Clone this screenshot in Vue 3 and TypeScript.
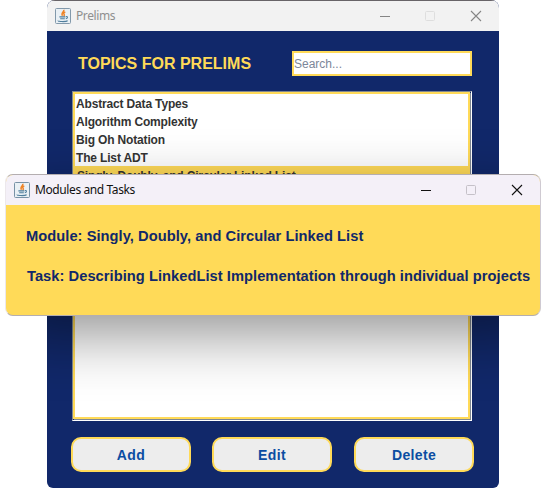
<script setup lang="ts">
import { ref } from 'vue'

const query = ref<string>('')
const topics: string[] = [
  'Abstract Data Types',
  'Algorithm Complexity',
  'Big Oh Notation',
  'The List ADT',
  'Singly, Doubly, and Circular Linked List',
]
const selected = ref<number>(4)
const actions: string[] = ['Add', 'Edit', 'Delete']
</script>

<template>
  <div class="desktop">
    <section class="window main">
      <header class="bar">
        <svg class="java" viewBox="0 0 16 16">
          <rect x=".5" y=".5" width="15" height="15" rx="1" fill="#e9f0f5" stroke="#8299ab" />
          <path d="M8.8 1.8C9.7 3.8 5.4 4.9 7.5 7.8M10.3 3.9C8.3 4.9 8.5 5.7 9.2 6.4C9.7 7 9.2 7.7 8.7 8.2" fill="none" stroke="#ee8428" stroke-width="1.5" />
          <path d="M4.4 8.9H10.4M5.2 10.8H9.8M11 8.6C13.2 8.2 12.7 10.6 10.8 10.8M3.2 12.6C2.5 13.8 11.5 14 12.6 12.6" fill="none" stroke="#4f7e9d" stroke-width="1.1" />
        </svg>
        <span class="title">Prelims</span>
        <svg class="controls" viewBox="0 0 110 12">
          <path d="M0 6.5H10" stroke="#858585" />
          <rect x="45.5" y="1.5" width="9" height="9" rx="1" fill="none" stroke="#dedede" />
          <path d="M91 1L101 11M101 1L91 11" stroke="#858585" stroke-width="1.1" />
        </svg>
      </header>
      <div class="body">
        <div class="head">
          <h1>TOPICS FOR PRELIMS</h1>
          <input v-model="query" class="search" type="text" placeholder="Search..." />
        </div>
        <div class="frame">
          <ul class="list">
            <li v-for="(topic, i) in topics" :key="topic" :class="{ on: i === selected }" @click="selected = i">{{ topic }}</li>
          </ul>
        </div>
        <div class="actions">
          <button v-for="action in actions" :key="action" type="button">{{ action }}</button>
        </div>
      </div>
      <div class="shade"></div>
    </section>

    <section class="window dialog">
      <header class="bar">
        <svg class="java" viewBox="0 0 16 16">
          <rect x=".5" y=".5" width="15" height="15" rx="1" fill="#e9f0f5" stroke="#7892a6" />
          <path d="M8.8 1.8C9.7 3.8 5.4 4.9 7.5 7.8M10.3 3.9C8.3 4.9 8.5 5.7 9.2 6.4C9.7 7 9.2 7.7 8.7 8.2" fill="none" stroke="#ee8428" stroke-width="1.5" />
          <path d="M4.4 8.9H10.4M5.2 10.8H9.8M11 8.6C13.2 8.2 12.7 10.6 10.8 10.8M3.2 12.6C2.5 13.8 11.5 14 12.6 12.6" fill="none" stroke="#4f7e9d" stroke-width="1.1" />
        </svg>
        <span class="title">Modules and Tasks</span>
        <svg class="controls" viewBox="0 0 110 12">
          <path d="M0 6.5H10" stroke="#111" />
          <rect x="45.5" y="1.5" width="9" height="9" rx="1" fill="none" stroke="#c5c1c8" />
          <path d="M91 1L101 11M101 1L91 11" stroke="#111" stroke-width="1.1" />
        </svg>
      </header>
      <div class="details">
        <p class="module">Module: Singly, Doubly, and Circular Linked List</p>
        <p class="task">Task: Describing LinkedList Implementation through individual projects</p>
      </div>
    </section>
  </div>
</template>

<style>
body {
  background: #fff;
}
</style>

<style scoped>
* {
  box-sizing: border-box;
}
.desktop {
  position: relative;
  width: 545px;
  height: 490px;
  overflow: hidden;
  background: #fff;
  font-family: 'Liberation Sans', Arial, sans-serif;
}
.window {
  position: absolute;
  overflow: hidden;
}
.main {
  left: 47px;
  top: 0;
  width: 452px;
  height: 488px;
  border-radius: 8px 8px 6px 6px;
  background: #11286a;
}
.bar {
  display: flex;
  align-items: center;
  padding-left: 8px;
  font-family: 'Noto Sans', 'Open Sans', sans-serif;
  font-size: 12px;
  letter-spacing: -0.4px;
  white-space: nowrap;
}
.main .bar {
  height: 31px;
  border-top: 1px solid #686468;
  background: #f2f2f2;
  color: #8f8f8f;
}
.java {
  width: 16px;
  height: 16px;
  flex: none;
}
.title {
  margin-left: 5px;
  line-height: 16px;
}
.controls {
  width: 110px;
  height: 12px;
  flex: none;
  margin: 0 9px 0 auto;
}
.body {
  padding: 20px 25px 0 24px;
}
.head {
  display: flex;
  justify-content: space-between;
  align-items: center;
  height: 25px;
  padding: 0 2px 0 7px;
}
h1 {
  margin: 0;
  padding-top: 1px;
  color: #ffda58;
  font-size: 16px;
  line-height: 20px;
  font-weight: bold;
  white-space: nowrap;
}
.search {
  width: 180px;
  height: 25px;
  padding: 0;
  border: 2px solid #ffda58;
  border-radius: 0;
  outline: none;
  background: #fff;
  font-family: inherit;
  font-size: 12px;
}
.search::placeholder {
  color: #7c8799;
  opacity: 1;
}
.frame {
  width: 400px;
  height: 330px;
  margin: 15px 0 0 1px;
  border: 1px solid #7f8893;
  border-right-color: #fff;
  border-bottom-color: #fff;
}
.list {
  width: 397px;
  height: 327px;
  margin: 0;
  padding: 0;
  list-style: none;
  border: 2px solid #ffda58;
  background: #fff;
  box-shadow: 1px 1px 0 #7f8893;
}
.list li {
  height: 18px;
  padding: 1px 0 0 1px;
  color: #333;
  font-size: 12px;
  font-weight: bold;
  letter-spacing: -0.16px;
  line-height: 18px;
  white-space: nowrap;
}
.list li.on {
  padding-left: 2px;
  background: #ffda58;
}
.actions {
  display: grid;
  grid-template-columns: 120px 120px 120px;
  column-gap: 21.5px;
  margin-top: 16px;
}
.actions button {
  height: 35px;
  padding: 0;
  border: 2px solid #ffda58;
  border-radius: 10px;
  background: #ededed;
  color: #0b4da2;
  font-family: inherit;
  font-size: 14px;
  font-weight: bold;
  letter-spacing: 0.35px;
}
.actions button:nth-child(2) {
  margin: 0 0.5px 0 -0.5px;
}
.shade {
  position: absolute;
  left: -41px;
  top: 175px;
  width: 535px;
  height: 140px;
  border-radius: 8px;
  box-shadow: 0 20px 60px rgba(0, 0, 0, 0.42);
  pointer-events: none;
}
.dialog {
  left: 5px;
  top: 174px;
  width: 536px;
  height: 142px;
  border: 1px solid #b4aeb0;
  border-left-color: #ece8ec;
  border-right-color: #cfcad2;
  border-radius: 8px;
  background: #ffda58;
}
.dialog .bar {
  height: 30px;
  background: #f4f0f8;
  color: #111;
}
.details {
  padding: 21px 0 0 20px;
  color: #11286a;
  font-size: 14.67px;
  font-weight: bold;
  letter-spacing: 0.05px;
  white-space: nowrap;
}
.details p {
  margin: 0;
  line-height: 20px;
}
.details .task {
  margin: 20px 0 0 1px;
}
</style>
